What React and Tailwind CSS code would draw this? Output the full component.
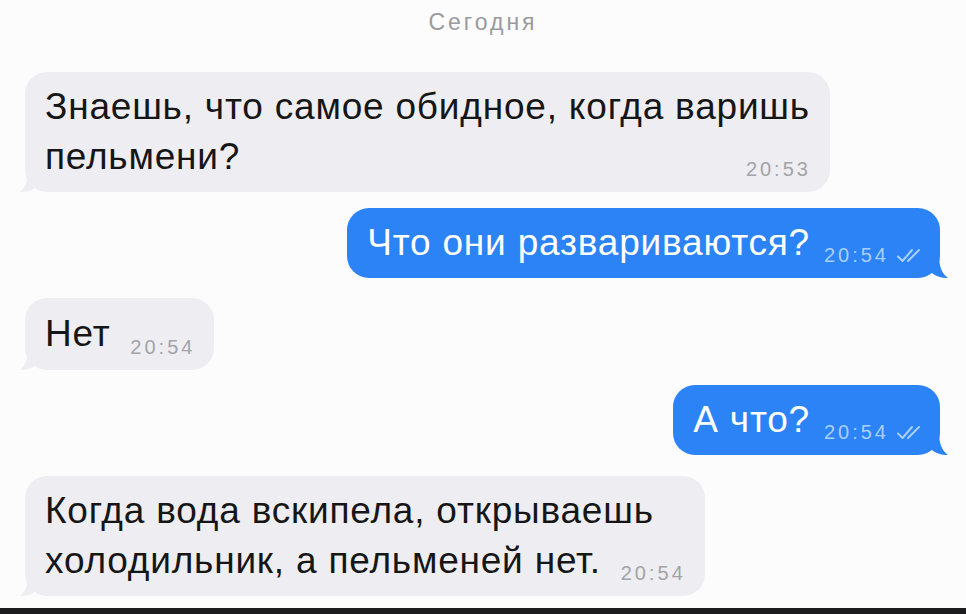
function Checks() {
  return (
    <svg width="27" height="15" viewBox="0 0 27 15" fill="none" stroke="currentColor" strokeWidth="2" strokeLinecap="round" strokeLinejoin="round">
      <path d="M2 8.5 L6.5 13 L16 2" />
      <path d="M12 13 L23 2" />
    </svg>
  );
}

function Bubble({ out, time, className = "", children }) {
  return (
    <div
      className={`relative rounded-[22px] py-[10px] pl-[20px] text-[37px] leading-[50px] tracking-[0.8px] ${
        out ? "self-end bg-[#2b83f6] pr-[16px] text-white" : "self-start bg-[#eeeef2] pr-[20px] text-[#161616]"
      } ${className}`}
    >
      {children}
      <span className={`inline-block ${out ? "w-[114px]" : "w-[84px]"}`} />
      <span
        className={`absolute bottom-[13px] flex items-center gap-[7px] text-[20px] leading-[20px] tracking-[3px] ${
          out ? "right-[17px] text-[#a9cffc]" : "right-[19px] text-[#a3a3a8]"
        }`}
      >
        {time}
        {out && <Checks />}
      </span>
      {out ? (
        <svg className="absolute bottom-0 right-[-9px]" width="20" height="22" viewBox="0 0 20 22">
          <path d="M0 0 L10 0 C10 10 13 18 19 22 C12 22 6 20 2 16 Z" fill="#2b83f6" />
        </svg>
      ) : (
        <svg className="absolute bottom-0 left-[-7px]" width="20" height="20" viewBox="0 0 20 20">
          <path d="M20 0 L10 0 C10 9 7 16 2 20 C9 20 14 18 18 15 Z" fill="#eeeef2" />
        </svg>
      )}
    </div>
  );
}

export default function App() {
  return (
    <div className="flex h-[614px] w-[966px] flex-col overflow-hidden bg-[#fcfcfd] font-['Liberation_Sans',Arial,sans-serif]">
      <div className="pt-[9px] text-center text-[23px] leading-[26px] tracking-[3px] text-[#9a9a9e]">Сегодня</div>

      <div className="flex flex-1 flex-col pl-[25px] pr-[26px] pt-[37px]">
        <Bubble time="20:53">
          Знаешь, что самое обидное, когда варишь
          <br />
          пельмени?
        </Bubble>

        <Bubble out time="20:54" className="mt-[16px]">
          Что они развариваются?
        </Bubble>

        <Bubble time="20:54" className="mt-[20px] py-[11px]">
          Нет
        </Bubble>

        <Bubble out time="20:54" className="mt-[15px]">
          А что?
        </Bubble>

        <Bubble time="20:54" className="mt-[21px]">
          Когда вода вскипела, открываешь
          <br />
          холодильник, а пельменей нет.
        </Bubble>
      </div>

      <div className="h-[6px] bg-[#1c1c1e]" />
    </div>
  );
}
